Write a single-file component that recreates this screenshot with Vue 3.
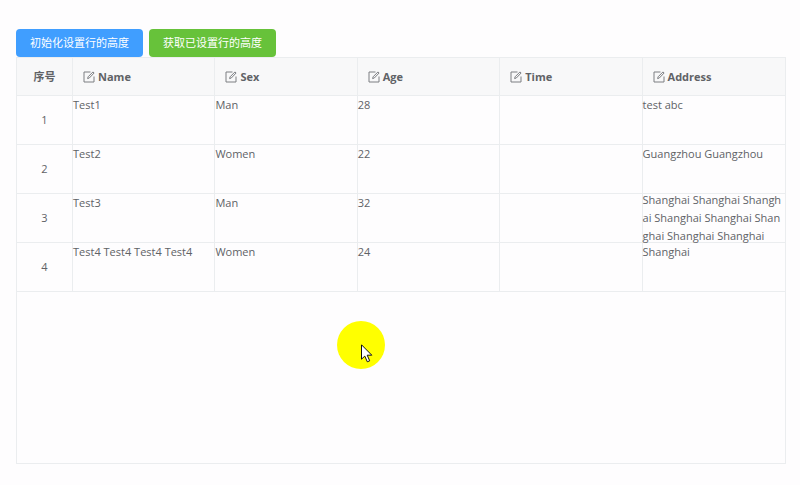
<template>
  <div class="page">
    <div class="toolbar">
      <button type="button" class="btn btn-primary" @click="initRowHeight">初始化设置行的高度</button>
      <button type="button" class="btn btn-success" @click="getRowHeight">获取已设置行的高度</button>
    </div>
    <div class="table-wrapper">
      <table class="data-table">
        <colgroup>
          <col class="col-seq">
          <col v-for="column in columns" :key="column.field">
        </colgroup>
        <thead>
          <tr>
            <th class="seq-cell">序号</th>
            <th v-for="column in columns" :key="column.field">
              <div class="title">
                <svg class="edit-icon" viewBox="0 0 12 12" aria-hidden="true">
                  <path d="M7.5 1H1v10h10V5.5" />
                  <path d="M4.6 7.6l.5-1.8L10 .9l1.1 1.1-4.8 5z" />
                </svg>
                <span>{{ column.title }}</span>
              </div>
            </th>
          </tr>
        </thead>
        <tbody>
          <tr v-for="(row, index) in tableData" :key="row.id">
            <td class="seq-cell">{{ index + 1 }}</td>
            <td v-for="column in columns" :key="column.field">
              <div class="cell" :style="{ height: rowHeight + 'px' }">
                <div class="cell-text">{{ row[column.field] }}</div>
              </div>
            </td>
          </tr>
        </tbody>
      </table>
      <div class="pointer">
        <svg class="cursor-icon" viewBox="0 0 12 19" aria-hidden="true">
          <path d="M.5.8v14.4l3.3-3.1 2.5 5.7 2.4-1-2.5-5.6h4.6z" />
        </svg>
      </div>
    </div>
  </div>
</template>

<script setup>
import { ref } from 'vue'

const rowHeight = ref(48)

const columns = [
  { field: 'name', title: 'Name' },
  { field: 'sex', title: 'Sex' },
  { field: 'age', title: 'Age' },
  { field: 'time', title: 'Time' },
  { field: 'address', title: 'Address' }
]

const tableData = ref([
  { id: 10001, name: 'Test1', sex: 'Man', age: 28, time: '', address: 'test abc' },
  { id: 10002, name: 'Test2', sex: 'Women', age: 22, time: '', address: 'Guangzhou Guangzhou' },
  { id: 10003, name: 'Test3', sex: 'Man', age: 32, time: '', address: 'Shanghai Shanghai Shanghai Shanghai Shanghai Shanghai Shanghai Shanghai' },
  { id: 10004, name: 'Test4 Test4 Test4 Test4', sex: 'Women', age: 24, time: '', address: 'Shanghai' }
])

const initRowHeight = () => {
  rowHeight.value = 48
}

const getRowHeight = () => rowHeight.value
</script>

<style>
body {
  margin: 0;
  background: #fefdfe;
}
</style>

<style scoped>
.page {
  padding: 29px 14px 20px 16px;
  font-family: "Open Sans", "Noto Sans CJK SC", sans-serif;
  font-size: 11px;
  line-height: 18px;
  color: #606266;
}

.toolbar {
  display: flex;
  gap: 6px;
}

.btn {
  height: 28px;
  padding: 0 14px;
  border: none;
  border-radius: 4px;
  font-family: inherit;
  font-size: 11px;
  line-height: 28px;
  color: #fff;
  cursor: pointer;
}

.btn-primary {
  background: #409eff;
}

.btn-success {
  background: #67c23a;
}

.table-wrapper {
  position: relative;
  min-height: 405px;
  border: 1px solid #ebedef;
}

.data-table {
  width: 100%;
  table-layout: fixed;
  border-collapse: separate;
  border-spacing: 0;
}

.col-seq {
  width: 56px;
}

th,
td {
  padding: 0;
  border-right: 1px solid #ebedef;
  border-bottom: 1px solid #ebedef;
  text-align: left;
}

th:last-child,
td:last-child {
  border-right: none;
}

th {
  height: 37px;
  background: #f8f8f9;
  font-weight: 700;
}

.seq-cell {
  text-align: center;
}

.title {
  display: flex;
  align-items: center;
  gap: 3px;
  padding-left: 10px;
}

.edit-icon {
  width: 12px;
  height: 12px;
  fill: none;
  stroke: #7c7e82;
  stroke-width: 1;
}

.cell {
  display: flex;
  align-items: center;
}

.cell-text {
  flex: 1;
  min-width: 0;
  min-height: 100%;
  word-break: break-all;
}

.pointer {
  position: absolute;
  top: 263px;
  left: 320px;
  width: 48px;
  height: 48px;
  border-radius: 50%;
  background: #ff0;
}

.cursor-icon {
  position: absolute;
  top: 23px;
  left: 24px;
  width: 12px;
  height: 19px;
  fill: #fff;
  stroke: #111;
  stroke-width: 1;
}
</style>
